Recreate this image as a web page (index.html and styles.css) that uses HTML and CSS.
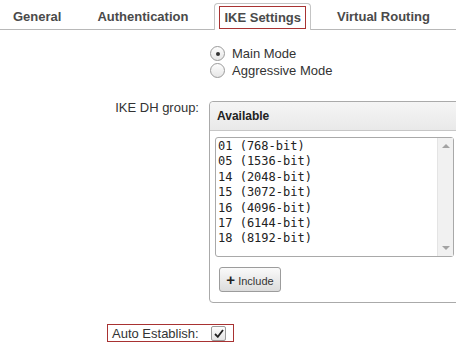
FILE: index.html
```html
<!DOCTYPE html>
<html lang="en">
<head>
    <meta charset="UTF-8">
    <title>IKE Settings</title>
    <link rel="stylesheet" href="styles.css">
</head>
<body>
    <nav class="tabs">
        <div class="tab">General</div>
        <div class="tab">Authentication</div>
        <div class="tab tab-active"><span class="mark">IKE Settings</span></div>
        <div class="tab">Virtual Routing</div>
    </nav>

    <div class="form">
        <div class="row row-modes">
            <div class="label"></div>
            <div class="modes">
                <label class="radio-line"><span class="radio checked"></span>Main Mode</label>
                <label class="radio-line"><span class="radio"></span>Aggressive Mode</label>
            </div>
        </div>

        <div class="row row-dh">
            <div class="label">IKE DH group:</div>
            <div class="panel">
                <div class="panel-head">Available</div>
                <div class="panel-body">
                    <div class="listbox">
                        <ul class="options">
                            <li>01 (768-bit)</li>
                            <li>05 (1536-bit)</li>
                            <li>14 (2048-bit)</li>
                            <li>15 (3072-bit)</li>
                            <li>16 (4096-bit)</li>
                            <li>17 (6144-bit)</li>
                            <li>18 (8192-bit)</li>
                        </ul>
                        <div class="scrollbar">
                            <span class="arrow arrow-up"></span>
                            <span class="arrow arrow-down"></span>
                        </div>
                    </div>
                    <button class="include-btn"><span class="plus">+</span> Include</button>
                </div>
            </div>
        </div>

        <div class="row row-auto">
            <div class="auto-box">
                <span class="auto-label">Auto Establish:</span>
                <span class="checkbox">
                    <svg width="10" height="9" viewBox="0 0 10 9"><path d="M1 5 L3.8 7.8 L9 1" fill="none" stroke="#222" stroke-width="1.8"/></svg>
                </span>
            </div>
        </div>
    </div>
</body>
</html>
```

FILE: styles.css
```css
body {
    margin: 0;
    font-family: "Liberation Sans", Arial, sans-serif;
    font-size: 13px;
    color: #333;
    background: #fff;
    overflow: hidden;
    height: 342px;
}

/* tab strip */
.tabs {
    display: flex;
    gap: 16px;
    height: 26px;
    padding: 3px 0 0 3px;
    border-bottom: 1px solid #b8b8b8;
}

.tab {
    display: flex;
    align-items: center;
    padding: 0 10px;
    font-weight: bold;
    color: #4a4a4a;
}

.tab-active {
    padding: 0 4px;
    height: 26px;
    margin-bottom: -1px;
    border: 1px solid #c4c4c4;
    border-bottom: none;
    border-radius: 4px 4px 0 0;
    background: #fff;
}

.tab-active .mark {
    padding: 3px 4px;
    border: 1px solid #a83232;
}

/* form rows */
.form {
    display: flex;
    flex-direction: column;
}

.row {
    display: flex;
}

.label {
    width: 199px;
    text-align: right;
    flex-shrink: 0;
}

.row-modes {
    margin-top: 15px;
}

.modes {
    margin-left: 11px;
    display: flex;
    flex-direction: column;
}

.radio-line {
    display: flex;
    align-items: center;
    height: 17px;
}

.radio {
    width: 13px;
    height: 13px;
    border: 1px solid #9a9a9a;
    border-radius: 50%;
    background: linear-gradient(#fdfdfd, #e6e6e6);
    margin-right: 7px;
    position: relative;
}

.radio.checked::after {
    content: "";
    position: absolute;
    left: 5px;
    top: 5px;
    width: 4px;
    height: 4px;
    border-radius: 50%;
    background: #333;
}

.row-dh {
    margin-top: 22px;
}

.row-dh .label {
    margin-top: -1px;
}

.panel {
    margin-left: 10px;
    width: 260px;
    flex-shrink: 0;
    border: 1px solid #aaa;
    border-radius: 4px;
}

.panel-head {
    height: 28px;
    line-height: 28px;
    padding-left: 7px;
    font-size: 12px;
    font-weight: bold;
    color: #222;
    background: linear-gradient(#f5f5f5, #e9e9e9);
    border-bottom: 1px solid #c6c6c6;
    border-radius: 4px 4px 0 0;
}

.panel-body {
    padding: 6px 0 10px 5px;
}

.listbox {
    display: flex;
    width: 237px;
    height: 118px;
    border: 1px solid #a9a9a9;
    border-radius: 3px;
}

.options {
    flex: 1;
    list-style: none;
    margin: 0;
    padding: 1px 0 0 2px;
    font-family: "DejaVu Sans Mono", monospace;
    font-size: 12px;
    line-height: 15.4px;
    color: #222;
}

.scrollbar {
    width: 15px;
    background: #f1f1f1;
    border-left: 1px solid #e4e4e4;
    display: flex;
    flex-direction: column;
    justify-content: space-between;
    align-items: center;
    padding: 6px 0;
}

.arrow {
    width: 0;
    height: 0;
    border-left: 4px solid transparent;
    border-right: 4px solid transparent;
}

.arrow-up {
    border-bottom: 4px solid #a3a3a3;
}

.arrow-down {
    border-top: 4px solid #a3a3a3;
}

.include-btn {
    margin: 10px 0 0 4px;
    width: 62px;
    height: 25px;
    padding: 0;
    border: 1px solid #9c9c9c;
    border-radius: 3px;
    background: linear-gradient(#fafafa, #dcdcdc);
    font-family: "Liberation Sans", Arial, sans-serif;
    font-size: 11px;
    color: #333;
}

.include-btn .plus {
    font-size: 15px;
    font-weight: bold;
    color: #222;
}

.row-auto {
    margin-top: 21px;
    padding-left: 107px;
}

.auto-box {
    display: flex;
    align-items: center;
    height: 16px;
    padding: 0 7px 0 4px;
    border: 1px solid #a83232;
}

.auto-label {
    width: 88px;
}

.checkbox {
    margin-left: 11px;
    width: 13px;
    height: 13px;
    border: 1px solid #9a9a9a;
    border-radius: 2px;
    background: linear-gradient(#fdfdfd, #e4e4e4);
    display: flex;
    align-items: center;
    justify-content: center;
}
```
